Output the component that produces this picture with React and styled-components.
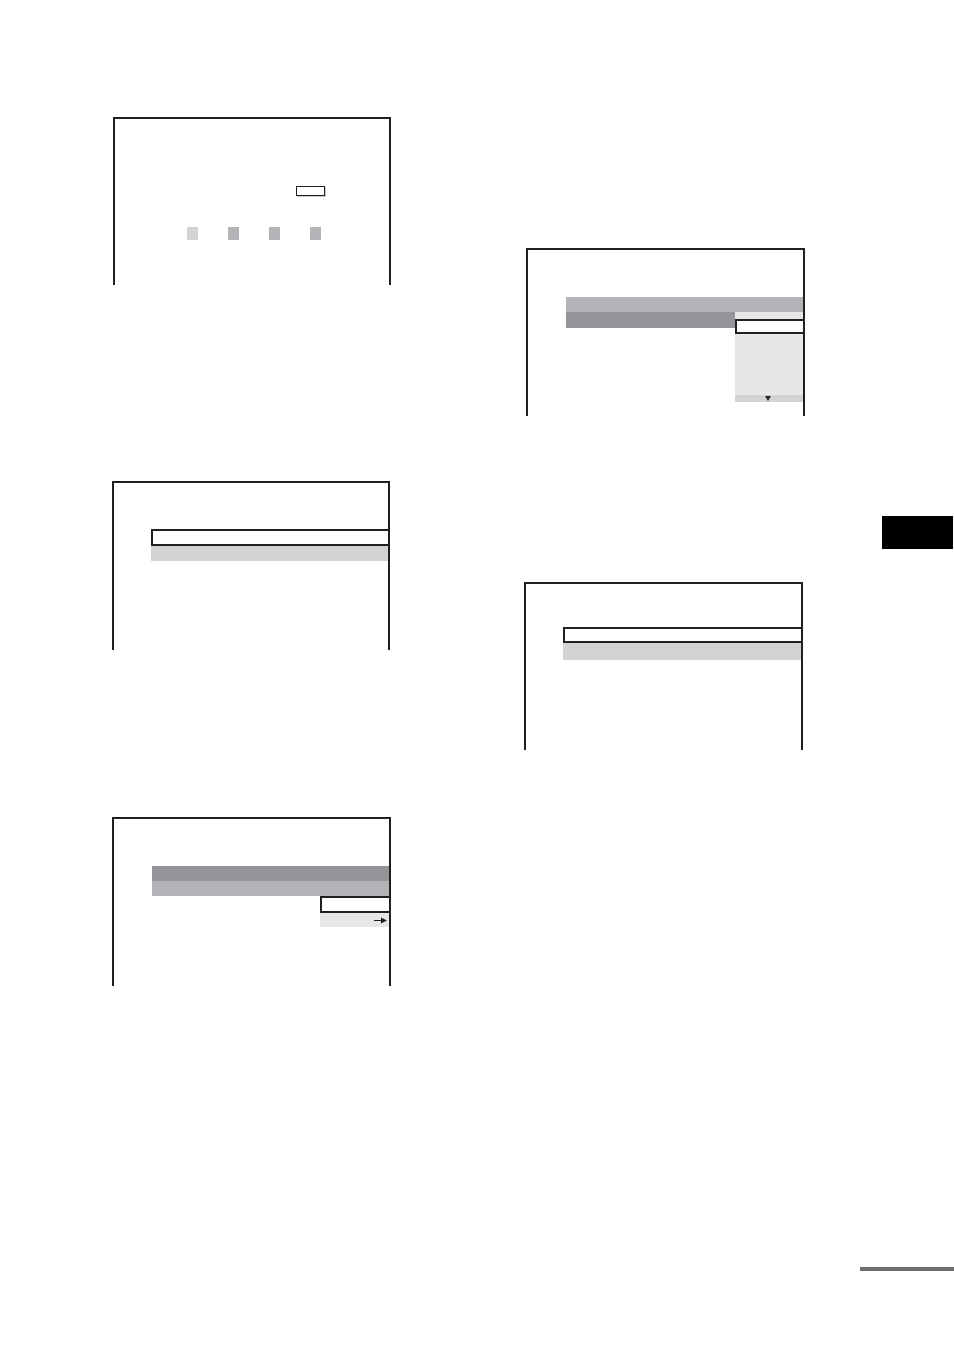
import React from 'react';
import styled, { createGlobalStyle } from 'styled-components';

const ink = '#231f20';
const grayDark = '#939598';
const grayMid = '#b1b3b6';
const grayLight = '#d1d3d4';
const grayPale = '#e6e7e8';

const GlobalStyle = createGlobalStyle`
	html, body {
		margin: 0;
		padding: 0;
		background: #ffffff;
		font-family: "Liberation Sans", Arial, sans-serif;
	}
`;

const Page = styled.div`
	width: 954px;
	height: 1351px;
	display: flex;
	align-items: flex-start;
	background: #ffffff;
	overflow: hidden;
`;

const Column = styled.div`
	display: flex;
	flex-direction: column;
	flex-shrink: 0;
	margin-left: ${(p) => p.$left}px;
	width: ${(p) => p.$width}px;
	padding-top: ${(p) => p.$top}px;
`;

const Screen = styled.div`
	box-sizing: border-box;
	display: flex;
	flex-direction: column;
	width: ${(p) => p.$width || 279}px;
	height: ${(p) => p.$height}px;
	margin-left: ${(p) => p.$shift || 0}px;
	margin-top: ${(p) => p.$gap || 0}px;
	border: 2px solid ${ink};
	border-bottom: none;
	background: #ffffff;
`;

const Menu = styled.div`
	display: flex;
	flex-direction: column;
	margin-top: ${(p) => p.$top}px;
	margin-left: ${(p) => p.$left}px;
`;

// outlined rows run into the screen's right border, so they have no right edge of their own
const Bar = styled.div`
	box-sizing: border-box;
	height: ${(p) => p.$h}px;
	background: ${(p) => p.$tone || '#ffffff'};
	border: ${(p) => (p.$outlined ? `2px solid ${ink}` : 'none')};
	border-right: none;
`;

const Split = styled.div`
	display: flex;
	align-items: flex-start;
`;

const Options = styled.div`
	box-sizing: border-box;
	display: flex;
	flex-direction: column;
	flex: ${(p) => (p.$fill ? 1 : 'none')};
	width: ${(p) => (p.$fill ? 'auto' : '69px')};
	margin-left: auto;
	height: ${(p) => (p.$h ? `${p.$h}px` : 'auto')};
	padding-top: ${(p) => p.$pad || 0}px;
	background: ${(p) => p.$tone || 'transparent'};
`;

const Choice = styled.div`
	box-sizing: border-box;
	display: flex;
	align-items: center;
	justify-content: ${(p) => p.$align || 'flex-end'};
	height: ${(p) => p.$h}px;
	padding-right: 2px;
	margin-top: ${(p) => (p.$push ? 'auto' : '0')};
	background: ${(p) => p.$tone || '#ffffff'};
	border: ${(p) => (p.$outlined ? `2px solid ${ink}` : 'none')};
	border-right: none;
`;

const StatusLine = styled.div`
	display: flex;
	margin-top: ${(p) => p.$top}px;
	margin-left: ${(p) => p.$left}px;
	gap: ${(p) => p.$gap || 0}px;
`;

const SmallField = styled.div`
	box-sizing: border-box;
	width: 29px;
	height: 10px;
	border: 1px solid ${ink};
	box-shadow: 1px 1px 0 #c8c8c8;
`;

const Swatch = styled.div`
	width: 11px;
	height: 13px;
	background: ${(p) => p.$tone};
`;

const Tab = styled.div`
	width: 71px;
	height: 33px;
	margin-left: 22px;
	background: #000000;
`;

const Rule = styled.div`
	width: 94px;
	height: 4px;
	margin-top: 718px;
	background: #6d6e71;
`;

function ArrowRight() {
	return (
		<svg width="13" height="7" viewBox="0 0 13 7">
			<line x1="0" y1="3.5" x2="8" y2="3.5" stroke={ink} strokeWidth="1" />
			<polygon points="7,0.5 13,3.5 7,6.5" fill={ink} />
		</svg>
	);
}

function ArrowDown() {
	return (
		<svg width="6" height="5" viewBox="0 0 6 5">
			<polygon points="0,0 6,0 3,5" fill={ink} />
		</svg>
	);
}

export default function App() {
	return (
		<Page>
			<GlobalStyle />
			<Column $left={112} $width={279} $top={117}>
				<Screen $shift={1} $width={278} $height={168}>
					<StatusLine $top={67} $left={181}>
						<SmallField />
					</StatusLine>
					<StatusLine $top={31} $left={72} $gap={30}>
						<Swatch $tone={grayLight} />
						<Swatch $tone={grayMid} />
						<Swatch $tone={grayMid} />
						<Swatch $tone={grayMid} />
					</StatusLine>
				</Screen>
				<Screen $gap={196} $width={278} $height={169}>
					<Menu $top={46} $left={37}>
						<Bar $outlined $h={17} />
						<Bar $tone={grayLight} $h={15} />
					</Menu>
				</Screen>
				<Screen $gap={167} $height={169}>
					<Menu $top={47} $left={38}>
						<Bar $tone={grayDark} $h={15} />
						<Bar $tone={grayMid} $h={15} />
						<Options>
							<Choice $outlined $h={17} />
							<Choice $tone={grayPale} $h={14}>
								<ArrowRight />
							</Choice>
						</Options>
					</Menu>
				</Screen>
			</Column>

			<Column $left={133} $width={281} $top={248}>
				<Screen $shift={2} $height={168}>
					<Menu $top={47} $left={38}>
						<Bar $tone={grayMid} $h={15} />
						<Split>
							<Bar $tone={grayDark} $h={16} style={{ width: 169 }} />
							<Options $fill $h={90} $pad={7} $tone={grayPale}>
								<Choice $outlined $h={15} />
								<Choice $push $tone={grayLight} $h={7} $align="center">
									<ArrowDown />
								</Choice>
							</Options>
						</Split>
					</Menu>
				</Screen>
				<Screen $gap={166} $height={168}>
					<Menu $top={43} $left={37}>
						<Bar $outlined $h={16} />
						<Bar $tone={grayLight} $h={17} />
					</Menu>
				</Screen>
			</Column>

			<Column $left={55} $width={94} $top={516}>
				<Tab />
				<Rule />
			</Column>
		</Page>
	);
}
